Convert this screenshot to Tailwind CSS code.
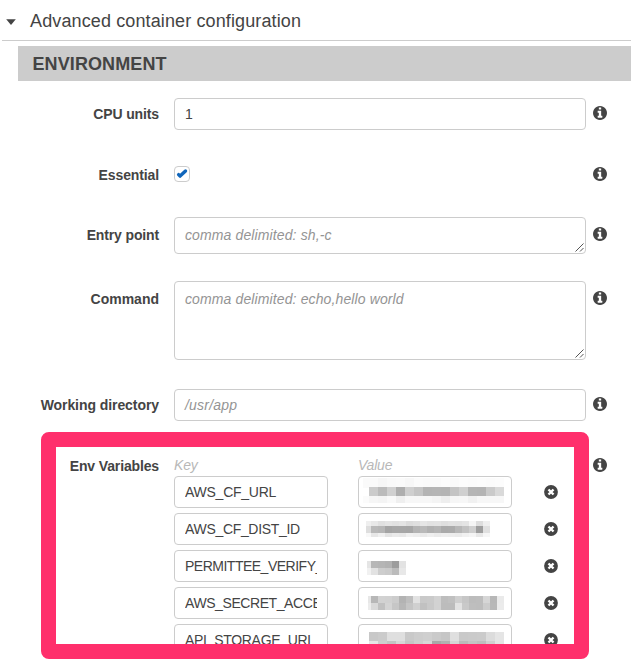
<!DOCTYPE html>
<html lang="en">
<head>
<meta charset="utf-8">
<title>Container configuration</title>
<script src="https://cdn.jsdelivr.net/npm/@tailwindcss/browser@4"></script>
</head>
<body class="bg-white">
<svg class="hidden">
  <symbol id="info" viewBox="0 128 1536 1536"><path fill="currentColor" d="M1024 1376v-160q0-14-9-23t-23-9h-96v-512q0-14-9-23t-23-9h-320q-14 0-23 9t-9 23v160q0 14 9 23t23 9h96v320h-96q-14 0-23 9t-9 23v160q0 14 9 23t23 9h448q14 0 23-9t9-23zm-128-896v-160q0-14-9-23t-23-9h-192q-14 0-23 9t-9 23v160q0 14 9 23t23 9h192q14 0 23-9t9-23zm640 416q0 209-103 385.5t-279.5 279.5-385.5 103-385.5-103-279.5-279.5-103-385.5 103-385.5 279.5-279.5 385.5-103 385.5 103 279.5 279.5 103 385.5z"/></symbol>
  <symbol id="remove" viewBox="0 0 14 14"><circle cx="7" cy="7" r="6.9" fill="currentColor"/><path d="M4.5 4.5l5 5M9.5 4.5l-5 5" stroke="#fff" stroke-width="2.4"/></symbol>
  <symbol id="grip" viewBox="0 0 9 9"><path d="M.5 8.5l8-8M5 8.5L8.5 5" stroke="#555" stroke-width="1" fill="none"/></symbol>
</svg>
<main class="relative h-[659px] w-[631px] overflow-hidden font-['Liberation_Sans',Arial,sans-serif] text-[14px] leading-5 text-[#444]">
  <header class="ml-0.5 flex h-[41px] items-center border-b border-[#ccc] pl-1">
    <svg class="mt-1 h-[6px] w-[10px]" viewBox="0 0 10 6"><path d="M.2.2h9.6L5 6z" fill="#444"/></svg>
    <h1 class="mt-0.5 ml-[14px] text-[18px] tracking-[0.12px] whitespace-nowrap">Advanced container configuration</h1>
  </header>
  <h2 class="mt-[5px] ml-[18px] flex h-[35px] items-center bg-[#ccc] pl-[14.5px] text-[18px] font-bold tracking-[0.1px]">ENVIRONMENT</h2>

  <div class="mt-[17px] flex h-8 items-start">
    <label class="w-[159px] pt-1.5 text-right font-bold tracking-[-0.12px]">CPU units</label>
    <div class="ml-[15px] h-8 w-[412px] rounded border border-[#ccc] px-[10px] pt-[5px]">1</div>
    <svg class="mt-2 ml-[7px] size-[14px]"><use href="#info"/></svg>
  </div>
  <div class="mt-9 flex h-4 items-center">
    <label class="w-[159px] pt-0.5 text-right font-bold tracking-[-0.12px]">Essential</label>
    <div class="ml-[15px] size-4 rounded border border-[#ccc]"><svg class="size-[14px]" viewBox="0 0 14 14"><path d="M3.6 7.6l1.5 1.5L10.5 4" fill="none" stroke="#1166bb" stroke-width="3.4" stroke-linecap="round" stroke-linejoin="round"/></svg></div>
    <svg class="ml-[403px] size-[14px]"><use href="#info"/></svg>
  </div>
  <div class="mt-[35px] flex h-[37px] items-start">
    <label class="w-[159px] pt-2 text-right font-bold tracking-[-0.14px]">Entry point</label>
    <div class="relative ml-[15px] h-[37px] w-[412px] rounded border border-[#ccc] px-[10px] pt-[7px] tracking-[0.12px] text-[#949494] italic">comma delimited: sh,-c<svg class="absolute right-px bottom-px size-[9px]"><use href="#grip"/></svg></div>
    <svg class="mt-2.5 ml-[7px] size-[14px]"><use href="#info"/></svg>
  </div>
  <div class="mt-[27px] flex h-[79px] items-start">
    <label class="w-[159px] pt-2 text-right font-bold">Command</label>
    <div class="relative ml-[15px] h-[79px] w-[412px] rounded border border-[#ccc] px-[10px] pt-[7px] tracking-[0.12px] text-[#949494] italic">comma delimited: echo,hello world<svg class="absolute right-px bottom-px size-[9px]"><use href="#grip"/></svg></div>
    <svg class="mt-2.5 ml-[7px] size-[14px]"><use href="#info"/></svg>
  </div>
  <div class="mt-[29px] flex h-8 items-start">
    <label class="w-[159px] pt-1.5 text-right font-bold tracking-[-0.07px]">Working directory</label>
    <div class="ml-[15px] h-8 w-[412px] rounded border border-[#ccc] px-[10px] pt-[5px] tracking-[0.2px] text-[#949494] italic">/usr/app</div>
    <svg class="mt-2 ml-[7px] size-[14px]"><use href="#info"/></svg>
  </div>
  <section class="mt-[34px] flex h-[204px] items-start">
    <label class="w-[159px] pt-px text-right font-bold tracking-[-0.14px]">Env Variables</label>
    <div class="ml-[15px] w-[412px]">
      <div class="flex h-[21px] tracking-[-0.2px] text-[#b8b8b8] italic"><span class="w-[184px]">Key</span><span>Value</span></div>
      <div class="flex flex-col gap-[5px] tracking-[-0.25px]">
        <div class="flex h-8 items-center">
          <div class="h-8 w-[154px] rounded border border-[#ccc] px-[10px] pt-[5px]"><div class="overflow-hidden whitespace-nowrap">AWS_CF_URL</div></div>
          <div class="ml-[30px] h-8 w-[154px] rounded border border-[#ccc]"><svg class="mosaic h-[30px] w-[152px]" shape-rendering="crispEdges"></svg></div>
          <svg class="ml-8 size-[14px]"><use href="#remove"/></svg>
        </div>
        <div class="flex h-8 items-center">
          <div class="h-8 w-[154px] rounded border border-[#ccc] px-[10px] pt-[5px]"><div class="overflow-hidden tracking-[-0.32px] whitespace-nowrap">AWS_CF_DIST_ID</div></div>
          <div class="ml-[30px] h-8 w-[154px] rounded border border-[#ccc]"><svg class="mosaic h-[30px] w-[152px]" shape-rendering="crispEdges"></svg></div>
          <svg class="ml-8 size-[14px]"><use href="#remove"/></svg>
        </div>
        <div class="flex h-8 items-center">
          <div class="h-8 w-[154px] rounded border border-[#ccc] px-[10px] pt-[5px]"><div class="overflow-hidden tracking-[-0.5px] whitespace-nowrap">PERMITTEE_VERIFY_</div></div>
          <div class="ml-[30px] h-8 w-[154px] rounded border border-[#ccc]"><svg class="mosaic h-[30px] w-[152px]" shape-rendering="crispEdges"></svg></div>
          <svg class="ml-8 size-[14px]"><use href="#remove"/></svg>
        </div>
        <div class="flex h-8 items-center">
          <div class="h-8 w-[154px] rounded border border-[#ccc] px-[10px] pt-[5px]"><div class="overflow-hidden tracking-[-0.42px] whitespace-nowrap">AWS_SECRET_ACCE</div></div>
          <div class="ml-[30px] h-8 w-[154px] rounded border border-[#ccc]"><svg class="mosaic h-[30px] w-[152px]" shape-rendering="crispEdges"></svg></div>
          <svg class="ml-8 size-[14px]"><use href="#remove"/></svg>
        </div>
        <div class="flex h-8 items-center">
          <div class="h-8 w-[154px] rounded border border-[#ccc] px-[10px] pt-[5px]"><div class="overflow-hidden tracking-[-0.3px] whitespace-nowrap">API_STORAGE_URL</div></div>
          <div class="ml-[30px] h-8 w-[154px] rounded border border-[#ccc]"><svg class="mosaic h-[30px] w-[152px]" shape-rendering="crispEdges"></svg></div>
          <svg class="ml-8 size-[14px]"><use href="#remove"/></svg>
        </div>
      </div>
    </div>
    <svg class="mt-[3px] ml-[7px] size-[14px]"><use href="#info"/></svg>
  </section>
  <div class="absolute top-[432px] left-[41px] h-[227px] w-[548px] rounded-lg border-[15px] border-[#ff2f6c]"></div>
</main>
<script>
// Redacted values: each band is [y, height, first x, first width, cell width, gray levels]
const bands = [
  [[1,10,4,6,9,'fa fa f6 f9 fa f7 fb fa fa fc fa fc fb fc fb fc'],[10,9,10,9,9,'cb bb d0 ae cf c5 b4 b5 b4 c4 d0 b5 b4 ca d9'],[19,7,4,6,9,'fb f6 f4 f9 ef f7 f7 f7 f4 ee f6 f7 f1 f7 f7 f7']],
  [[7,5,7,5,7,'ef e8 e0 e4 e1 e4 dc df e6 e2 e3 df e2 e1 e4 f5 dd ef'],[12,7,7,5,7,'de b9 b6 a4 a7 a7 a6 b4 b9 b1 b5 aa ab b7 c2 cf 9e e0'],[19,4,7,5,7,'f8 e7 f0 e4 ea e8 f1 ee ea ef eb ee ed eb f1 f5 e8 f6']],
  [[10,7,8,4,7,'e5 b7 b5 b2 9d e3'],[17,7,8,4,7,'f1 e2 cd ca bb e8']],
  [[8,7,9,3,7,'e7 b7 d2 d1 cc b3 be e2 c9 ca d2 bd c0 cf dd c6 bc bd d6 b7 ea'.replace(' dd', '')],[15,7,9,3,7,'ec d9 c1 d4 c6 b7 c5 d0 c1 c9 d2 bc bc e3 c9 be bd cc b8 eb']],
  [[7,9,10,9,9,'c8 cb df df c9 cd cf ca c6 df c9 ca cb dc e5'],[16,9,10,9,9,'e5 cd c3 d6 c5 ce d7 a8 b0 d5 ba c3 be d0 e4']]
];
document.querySelectorAll('.mosaic').forEach((svg, i) => {
  svg.innerHTML = bands[i].map(([y, h, x0, w0, w, levels]) => {
    let x = x0;
    return levels.split(' ').map((g, n) => {
      const cw = n ? w : w0, r = `<rect x="${x}" y="${y}" width="${cw}" height="${h}" fill="#${g}${g}${g}"/>`;
      x += cw;
      return r;
    }).join('');
  }).join('');
});
</script>
</body>
</html>
